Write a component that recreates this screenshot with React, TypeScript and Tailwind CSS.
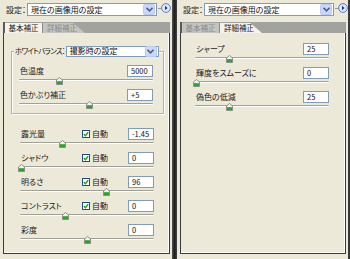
import React from 'react';

function DropArrow() {
    return (
        <div className="flex h-[11px] w-[12px] shrink-0 items-center justify-center rounded-[2px] border border-[#b9cbf3] bg-[#c9d8fc]">
            <svg width="7" height="5" viewBox="0 0 7 5">
                <path d="M0.5 0.8 L3.5 3.8 L6.5 0.8" fill="none" stroke="#4d6185" strokeWidth="1.6" />
            </svg>
        </div>
    );
}

function Select({ text, className }: { text: string; className: string }) {
    return (
        <div className={`flex shrink-0 items-center justify-between border border-[#7f9db9] bg-white pl-[3px] pr-[1px] ${className}`}>
            <span className="whitespace-nowrap text-[8px] leading-none text-[#111]">{text}</span>
            <DropArrow />
        </div>
    );
}

function RoundButton() {
    return (
        <div className="ml-[1px] flex shrink-0 items-center">
            <div className="h-px w-[3px] bg-[#9a9a9a]" />
            <svg width="10" height="10" viewBox="0 0 10 10">
                <circle cx="5" cy="5" r="4.4" fill="#dfe8fb" stroke="#4a72c8" strokeWidth="0.9" />
                <path d="M4 2.8 L6.6 5 L4 7.2 Z" fill="#203a8a" />
            </svg>
        </div>
    );
}

function TopBar() {
    return (
        <div className="flex h-[22px] items-start pt-[3px] pl-[6px]">
            <span className="mt-[3px] w-[21px] shrink-0 whitespace-nowrap text-[8px] leading-none text-[#222]">設定：</span>
            <Select text="現在の画像用の設定" className="h-[13px] w-[130px]" />
            <RoundButton />
        </div>
    );
}

function Tabs({ active }: { active: 0 | 1 }) {
    const on = 'bg-[#f4f3ec] text-[#222]';
    const off = 'bg-[#c4c4c0] text-[#8a8a8a]';
    return (
        <div className="ml-[3px] mr-[2px] flex h-[11px] items-end bg-[#a2a29e]">
            <div className="h-[11px] w-[2px] bg-[#5a5a5a]" />
            <div className={`flex h-[10px] w-[38px] items-center justify-center whitespace-nowrap border-r border-[#8a8a8a] text-[7.5px] leading-none ${active === 0 ? on : off}`}>
                基本補正
            </div>
            <div
                className={`flex h-[10px] w-[42px] items-center whitespace-nowrap pl-[4px] text-[7.5px] leading-none [clip-path:polygon(0_0,72%_0,100%_100%,0_100%)] ${active === 1 ? on : off}`}
            >
                詳細補正
            </div>
        </div>
    );
}

function Slider({ at }: { at: number }) {
    return (
        <div className="relative h-[12px] w-[134px]">
            <div className="absolute left-0 right-0 top-[2px] h-[2px] rounded-full border-t border-[#a0a09a] bg-white" />
            <svg className="absolute top-[0px]" style={{ left: at - 3 }} width="7" height="8" viewBox="0 0 7 8">
                <path d="M3.5 0.5 L6.5 3 L6.5 7.5 L0.5 7.5 L0.5 3 Z" fill="#f2f2f2" stroke="#777" strokeWidth="0.8" />
                <rect x="1" y="4.2" width="5" height="2.9" fill="#2aa52a" />
            </svg>
        </div>
    );
}

function Row({ label, value, auto, at }: { label: string; value: string; auto?: boolean; at: number }) {
    return (
        <div className="flex w-[134px] flex-col">
            <div className="flex h-[12px] items-center">
                <span className="w-[62px] shrink-0 whitespace-nowrap pl-[1px] text-[8px] leading-none text-[#1a1a1a]">{label}</span>
                <div className="flex w-[46px] shrink-0 items-center gap-[2px]">
                    {auto && (
                        <>
                            <div className="flex h-[8px] w-[8px] items-center justify-center border border-[#1c5180] bg-white">
                                <svg width="6" height="6" viewBox="0 0 6 6">
                                    <path d="M0.8 3 L2.4 4.6 L5.2 1.2" fill="none" stroke="#21a121" strokeWidth="1.4" />
                                </svg>
                            </div>
                            <span className="whitespace-nowrap text-[8px] leading-none text-[#1a1a1a]">自動</span>
                        </>
                    )}
                </div>
                <div className="flex h-[12px] w-[26px] shrink-0 items-center border border-[#7f9db9] bg-white pl-[3px] text-[7.5px] leading-none text-[#111]">
                    {value}
                </div>
            </div>
            <Slider at={at} />
        </div>
    );
}

function Frame({ children, className }: { children: React.ReactNode; className: string }) {
    return (
        <div className={`ml-[3px] h-[221px] border border-t-0 border-[#3a3a3a] shadow-[inset_-1px_-1px_0_#ffffff] ${className}`}>
            {children}
        </div>
    );
}

function LeftPanel() {
    return (
        <div className="flex w-[172px] flex-col">
            <TopBar />
            <Tabs active={0} />
            <Frame className="w-[167px]">
                <div className="relative ml-[7px] mt-[13px] w-[153px]">
                    <div className="absolute left-0 right-0 top-[5px] bottom-0 border border-[#b5b3a8] shadow-[inset_1px_1px_0_#ffffff,1px_1px_0_#ffffff]" />
                    <div className="relative flex h-[10px] items-center">
                        <span className="ml-[3px] mr-[1px] shrink-0 whitespace-nowrap bg-[#ece9d8] pl-[1px] text-[7.5px] leading-none tracking-[-0.8px] text-[#1a1a1a]">
                            ホワイトバランス：
                        </span>
                        <Select text="撮影時の設定" className="h-[11px] w-[93px]" />
                    </div>
                    <div className="relative flex flex-col pl-[8px] pt-[9px] pb-[1px]">
                        <Row label="色温度" value="5000" at={40} />
                        <Row label="色かぶり補正" value="+5" at={70} />
                    </div>
                </div>
                <div className="ml-[16px] mt-[14px] flex flex-col">
                    <Row label="露光量" value="-1.45" auto at={42} />
                    <Row label="シャドウ" value="0" auto at={1} />
                    <Row label="明るさ" value="96" auto at={86} />
                    <Row label="コントラスト" value="0" auto at={45} />
                    <Row label="彩度" value="0" at={67} />
                </div>
            </Frame>
        </div>
    );
}

function RightPanel() {
    return (
        <div className="flex w-[171px] flex-col">
            <TopBar />
            <Tabs active={1} />
            <Frame className="w-[166px]">
                <div className="ml-[14px] mt-[10px] flex flex-col">
                    <Row label="シャープ" value="25" at={34} />
                    <Row label="輝度をスムーズに" value="0" at={1} />
                    <Row label="偽色の低減" value="25" at={34} />
                </div>
            </Frame>
        </div>
    );
}

export default function App() {
    return (
        <div className="flex h-[259px] w-[350px] overflow-hidden bg-[#ece9d8] font-['Noto_Sans_CJK_JP','Noto_Sans',sans-serif] [font-feature-settings:'palt']">
            <LeftPanel />
            <div className="w-[5px] bg-gradient-to-r from-[#555] via-[#1e1e1e] to-[#444]" />
            <RightPanel />
            <div className="w-[2px] bg-[#3a3a3a]" />
        </div>
    );
}
